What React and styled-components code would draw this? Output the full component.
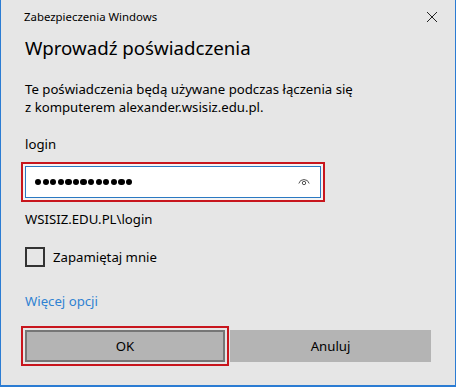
import React from 'react';
import styled, { createGlobalStyle } from 'styled-components';

const GlobalStyle = createGlobalStyle`
  html, body {
    margin: 0;
    padding: 0;
    background: #e6e6e6;
  }
  body {
    font-family: 'Noto Sans', 'Liberation Sans', sans-serif;
    color: #000;
  }
`;

const Window = styled.div`
  box-sizing: border-box;
  width: 456px;
  height: 387px;
  background: #e6e6e6;
  border-left: 1px solid #2b7cd3;
  border-right: 1px solid #2b7cd3;
  border-bottom: 2px solid #2b7cd3;
  display: flex;
  flex-direction: column;
`;

const TitleBar = styled.div`
  height: 33px;
  display: flex;
  align-items: center;
  justify-content: space-between;
  padding: 0 17px 0 23px;
  font-size: 11.4px;
`;

const CloseButton = styled.div`
  width: 12px;
  height: 12px;
  display: flex;
  svg {
    display: block;
  }
`;

const Body = styled.div`
  padding: 0 24px;
  display: flex;
  flex-direction: column;
`;

const Heading = styled.h1`
  margin: 0;
  padding-top: 1px;
  font-size: 18.7px;
  font-weight: 400;
  line-height: 27px;
`;

const Text = styled.p`
  margin: ${(p) => p.$top || 0}px 0 0;
  font-size: 13.2px;
  line-height: 18px;
  color: ${(p) => (p.$link ? '#2f82d2' : '#000')};
`;

const Highlight = styled.div`
  align-self: flex-start;
  margin: ${(p) => p.$top - 4}px -4px -4px;
  border: 2px solid #c8161d;
  padding: 2px;
  background: ${(p) => (p.$light ? '#f4f4f4' : 'transparent')};
`;

const Input = styled.div`
  box-sizing: border-box;
  width: 296px;
  height: 32px;
  border: 1px solid #2b79c2;
  background: #fff;
  display: flex;
  align-items: center;
  padding: 0 10px 0 9px;
  justify-content: space-between;
`;

const Dots = styled.div`
  display: flex;
  gap: 1.4px;
`;

const Dot = styled.span`
  width: 6.2px;
  height: 6.2px;
  border-radius: 50%;
  background: #000;
`;

const CheckRow = styled.label`
  margin-top: 19px;
  display: flex;
  align-items: center;
  gap: 8px;
  font-size: 13.2px;
  line-height: 20px;
`;

const Box = styled.span`
  box-sizing: border-box;
  width: 20px;
  height: 20px;
  border: 2px solid #333;
`;

const Buttons = styled.div`
  margin-top: 20px;
  display: flex;
  align-items: center;
  gap: 5px;
`;

const Button = styled.div`
  box-sizing: border-box;
  height: 32px;
  width: ${(p) => (p.$fill ? 'auto' : '200px')};
  flex: ${(p) => (p.$fill ? 1 : 'none')};
  background: #b4b4b4;
  border: 2px solid ${(p) => (p.$default ? '#767676' : '#b4b4b4')};
  display: flex;
  align-items: center;
  justify-content: center;
  font-size: 13.2px;
`;

const EyeIcon = () => (
  <svg width="12" height="8" viewBox="0 0 12 8" fill="none" stroke="#555" strokeWidth="1">
    <path d="M0.8 5.5 A5.4 5.4 0 0 1 11.2 5.5" />
    <circle cx="6" cy="5" r="1.7" />
  </svg>
);

export default function App() {
  return (
    <>
      <GlobalStyle />
      <Window>
        <TitleBar>
          <span>Zabezpieczenia Windows</span>
          <CloseButton>
            <svg width="12" height="12" viewBox="0 0 12 12" stroke="#222" strokeWidth="1">
              <path d="M1 1 L11 11 M11 1 L1 11" />
            </svg>
          </CloseButton>
        </TitleBar>
        <Body>
          <Heading>Wprowadź poświadczenia</Heading>
          <Text $top={19}>
            Te poświadczenia będą używane podczas łączenia się
            <br />z komputerem alexander.wsisiz.edu.pl.
          </Text>
          <Text $top={19}>login</Text>
          <Highlight $top={13} $light>
            <Input>
              <Dots>
                {Array.from({ length: 13 }).map((_, i) => (
                  <Dot key={i} />
                ))}
              </Dots>
              <EyeIcon />
            </Input>
          </Highlight>
          <Text $top={12}>WSISIZ.EDU.PL\login</Text>
          <CheckRow>
            <Box />
            Zapamiętaj mnie
          </CheckRow>
          <Text $top={25} $link>
            Więcej opcji
          </Text>
          <Buttons>
            <Highlight $top={0}>
              <Button $default>OK</Button>
            </Highlight>
            <Button $fill>Anuluj</Button>
          </Buttons>
        </Body>
      </Window>
    </>
  );
}
